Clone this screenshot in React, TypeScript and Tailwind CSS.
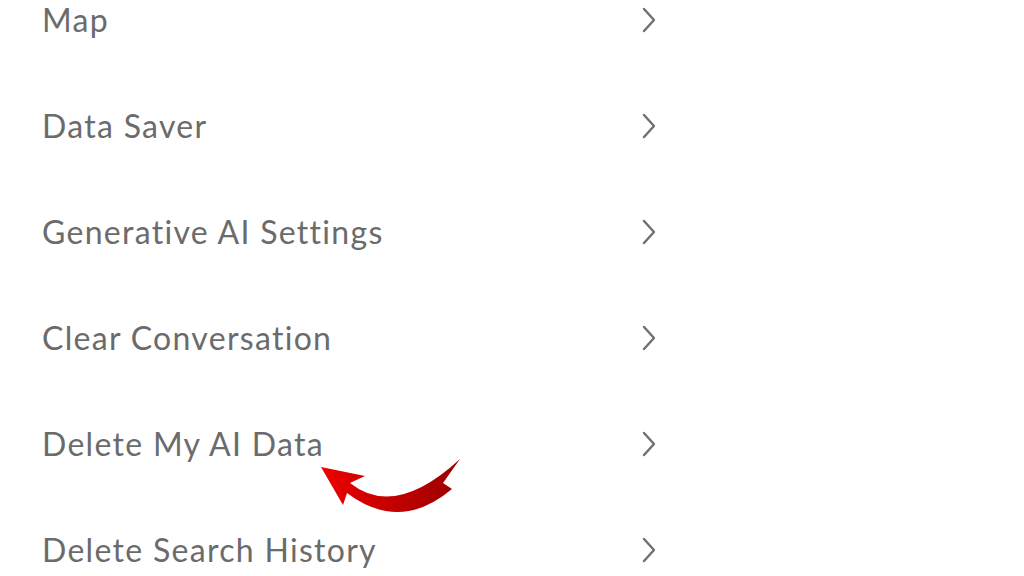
import React from "react";

const items = [
  "Map",
  "Data Saver",
  "Generative AI Settings",
  "Clear Conversation",
  "Delete My AI Data",
  "Delete Search History",
];

function Chevron() {
  return (
    <svg width="18" height="26" viewBox="0 0 18 26" fill="none">
      <path d="M4 2 L14 13 L4 24" stroke="#6f6f6f" strokeWidth="2.4" strokeLinecap="round" strokeLinejoin="round" />
    </svg>
  );
}

export default function App() {
  return (
    <div className="relative w-[1024px] h-[576px] overflow-hidden bg-white" style={{ fontFamily: "Lato, 'Noto Sans', sans-serif" }}>
      <div className="flex flex-col -mt-[33px] pl-[42px] w-[658px]">
        {items.map((t) => (
          <div key={t} className="h-[106px] flex items-center justify-between">
            <span className="text-[32px] text-[#6b6b6b] leading-none tracking-[1.3px]">{t}</span>
            <Chevron />
          </div>
        ))}
      </div>
      <svg className="absolute left-[300px] top-[440px]" width="180" height="80" viewBox="0 0 180 80">
        <defs>
          <linearGradient id="g" x1="0" y1="0" x2="1" y2="0">
            <stop offset="0" stopColor="#ee0000" />
            <stop offset="1" stopColor="#9a0000" />
          </linearGradient>
        </defs>
        <path
          d="M21 27 L65 36 L50 43 Q95 79 160 19 L143 43 L152 49 Q100 93 47 53 L43 65 Z"
          fill="url(#g)"
        />
      </svg>
    </div>
  );
}
